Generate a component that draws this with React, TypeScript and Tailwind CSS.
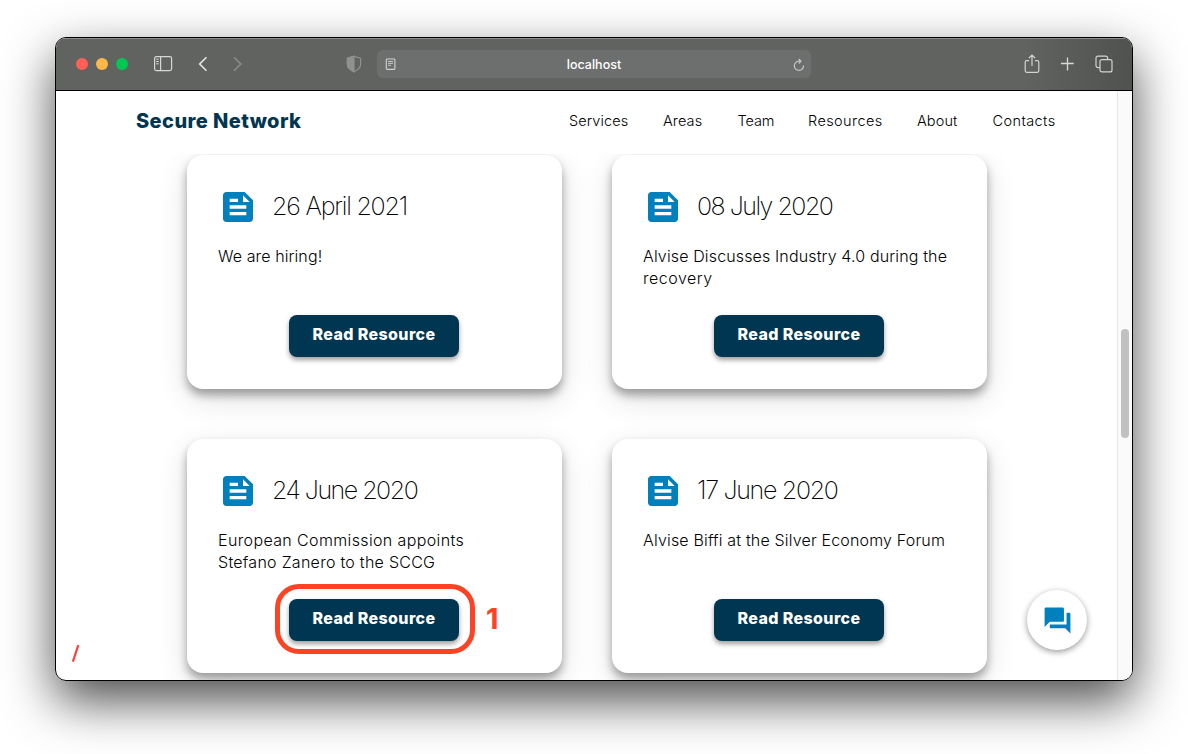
import React from "react";
import { MdFeed, MdForum } from "react-icons/md";

const NAV = [
  { label: "Services", style: "w-[94px] tracking-[0.1px]" },
  { label: "Areas", style: "w-[74.5px] tracking-[0.1px]" },
  { label: "Team", style: "w-[70.5px] tracking-[-0.1px]" },
  { label: "Resources", style: "w-[109px] tracking-[0.4px]" },
  { label: "About", style: "w-[75.5px] tracking-[0.1px]" },
  { label: "Contacts", style: "w-[66px] tracking-[0.4px]" },
];

const CARDS = [
  {
    date: "26 April 2021",
    dateStyle: "tracking-[-1.2px]",
    lines: [{ text: "We are hiring!", style: "tracking-[0.1px]" }],
    marked: false,
  },
  {
    date: "08 July 2020",
    dateStyle: "tracking-[-1.5px]",
    lines: [
      { text: "Alvise Discusses Industry 4.0 during the", style: "tracking-[0.14px]" },
      { text: "recovery", style: "tracking-[0.5px]" },
    ],
    marked: false,
  },
  {
    date: "24 June 2020",
    dateStyle: "tracking-[-1.5px]",
    lines: [
      { text: "European Commission appoints", style: "tracking-[0.37px]" },
      { text: "Stefano Zanero to the SCCG", style: "tracking-[0.27px]" },
    ],
    marked: true,
  },
  {
    date: "17 June 2020",
    dateStyle: "tracking-[-1.3px]",
    lines: [{ text: "Alvise Biffi at the Silver Economy Forum", style: "tracking-[0.17px]" }],
    marked: false,
  },
];

type CardData = (typeof CARDS)[number];

function TitleBar() {
  return (
    <div className="flex h-[53px] shrink-0 items-center border-b border-black bg-linear-to-r from-[#616361] from-90% to-[#50524f] shadow-[inset_0_1px_0_#8b8d8b]">
      <div className="ml-5 flex gap-2">
        <span className="size-3 rounded-full bg-[#ff5f57]" />
        <span className="size-3 rounded-full bg-[#ffb849]" />
        <span className="size-3 rounded-full bg-[#00c853]" />
      </div>
      <svg className="ml-[25px]" width="20" height="16" viewBox="0 0 20 16" fill="none" stroke="#d6d7d6" strokeWidth="1.2">
        <rect x="1.6" y="0.6" width="17" height="14" rx="1.8" />
        <path d="M7.6 .6v14" />
        <path d="M3.2 3.200h2.600M3.200 5.500h2.600M3.200 7.800h2.600" strokeWidth="1" />
      </svg>
      <svg className="ml-[24px]" width="12" height="16" viewBox="0 0 12 16" fill="none" stroke="#e6e6e6" strokeWidth="1.6">
        <path d="M9.5 1.3 2.7 8l6.8 6.7" />
      </svg>
      <svg className="ml-[23px]" width="12" height="16" viewBox="0 0 12 16" fill="none" stroke="#8b8d8b" strokeWidth="1.6">
        <path d="M2 1.3 8.8 8 2 14.7" />
      </svg>
      <svg className="ml-[102px]" width="16" height="18" viewBox="0 0 16 18" fill="none" stroke="#8f918f" strokeWidth="1.2">
        <path d="M8 1.2 14.6 3.3v6.2c0 3.2-3 5.6-6.6 7.3C4.4 15.1 1.4 12.7 1.4 9.5V3.3z" />
        <path d="M8 1.2v15.6C4.4 15.1 1.4 12.7 1.4 9.5V3.3z" fill="#8f918f" />
      </svg>
      <div className="ml-[15px] flex h-7 w-[434px] items-center rounded-md bg-[#6d6f6e] pl-[8px] pr-[6px]">
        <svg width="12" height="14" viewBox="0 0 12 14" fill="none" stroke="#cfd0cf" strokeWidth="1.1">
          <rect x="1.3" y="2" width="8.6" height="10.400" rx=".8" />
          <path d="M3 4.500h5M3 6.400h5M3 8.300h3" strokeWidth=".9" />
        </svg>
        <span className="grow pr-[2px] pt-[2px] text-center text-[12.5px] font-medium tracking-[0.02px] text-white">localhost</span>
        <svg className="mt-px" width="12" height="14" viewBox="0 0 12 14" fill="none" stroke="#c4c5c4" strokeWidth="1.2">
          <path d="M10.5 7.5a4.6 4.6 0 1 1-4.6-4.3h1.800M5.700 1l2.300 2.200-2.300 2.300" />
        </svg>
      </div>
      <svg className="-mt-px ml-[213px]" width="16" height="20" viewBox="0 0 16 20" fill="none" stroke="#d2d3d2" strokeWidth="1.2">
        <path d="M5 6.7H2.700a1.500 1.500 0 0 0-1.500 1.500v8.600a1.500 1.500 0 0 0 1.500 1.500h10.600a1.500 1.500 0 0 0 1.500-1.500V8.200a1.500 1.500 0 0 0-1.500-1.500H11M8 12V1.200M4.800 4.200 8 1l3.200 3.200" />
      </svg>
      <svg className="-mt-px ml-[20px]" width="14" height="14" viewBox="0 0 14 14" fill="none" stroke="#d8d9d8" strokeWidth="1.3">
        <path d="M7.500 .6v12.800M.9 6.500h12.800" />
      </svg>
      <svg className="-mt-px ml-[21px]" width="18" height="18" viewBox="0 0 18 18" fill="none" stroke="#d2d3d2" strokeWidth="1.2">
        <rect x="5" y="4.600" width="12" height="12.300" rx="2" />
        <path d="M5 12.600H3a2 2 0 0 1-2-2V3.100a2 2 0 0 1 2-2h7.600a2 2 0 0 1 2 2v1.500" />
      </svg>
    </div>
  );
}

function Card({ date, dateStyle, lines, marked }: CardData) {
  return (
    <article className="flex h-[234px] flex-col rounded-[16px] bg-white px-[31px] py-8 shadow-[0_6px_10px_rgba(0,0,0,0.34),0_10px_32px_rgba(0,0,0,0.12)]">
      <div className="flex h-10 items-center">
        <MdFeed size={40} color="#0080bd" />
        <h2 className={`ml-[14px] whitespace-nowrap pb-0.5 text-[25px] font-extralight leading-9 ${dateStyle}`}>{date}</h2>
      </div>
      <div className="mt-[18px] h-11 whitespace-nowrap text-[16px] font-light leading-[22px]">
        {lines.map((line) => (
          <p key={line.text} className={line.style}>{line.text}</p>
        ))}
      </div>
      <div className="relative ml-[71px] mt-[26px] flex h-[42px] w-[170px]">
        <button className="h-[42px] w-full whitespace-nowrap rounded-lg bg-[#003652] pb-[4px] text-[16px] font-extrabold tracking-[0.38px] text-white shadow-[0_3px_5px_rgba(0,0,0,0.38)]">
          Read Resource
        </button>
        {marked && (
          <>
            <span className="absolute -left-[14px] -top-[15px] h-[70px] w-[200px] rounded-[24px] border-[5px] border-[#ff4124]" />
            <span className="absolute left-[197px] top-[1px] text-[29px] font-bold leading-[38px] text-[#ff4124]">1</span>
          </>
        )}
      </div>
    </article>
  );
}

export default function App() {
  return (
    <div className="h-[754px] w-[1188px] overflow-hidden bg-white pl-[55px] pt-[37px] font-['Inter',sans-serif] text-black">
      <div className="h-[644px] w-[1078px] rounded-[11px] shadow-[0_20px_50px_rgba(0,0,0,0.7)]">
        <div className="relative flex h-full flex-col overflow-hidden rounded-[11px] border border-black bg-white">
          <TitleBar />
          <div className="flex min-h-0 grow">
            <div className="flex w-[1061px] flex-col overflow-hidden">
              <header className="z-10 flex h-[63px] shrink-0 items-center bg-white pb-[3px] pl-[80px]">
                <div className="w-[433px] whitespace-nowrap text-[20px] font-extrabold tracking-[0.42px] text-[#003652]">Secure Network</div>
                <nav className="flex text-[14.5px] font-light">
                  {NAV.map((item) => (
                    <a key={item.label} className={item.style}>{item.label}</a>
                  ))}
                </nav>
              </header>
              <main className="grid grid-cols-[375px_375px] gap-[50px] pl-[131px] pt-px">
                {CARDS.map((card) => (
                  <Card key={card.date} {...card} />
                ))}
              </main>
            </div>
            <div className="flex w-[15px] flex-col border-l border-[#e8e8e8] bg-[#fafafa] pl-[3px] pt-[238px]">
              <div className="h-[109px] w-2 rounded-full bg-[#c1c1c1]" />
            </div>
          </div>
          <div className="absolute bottom-[30px] right-[45px] flex size-[60px] items-center justify-center rounded-full bg-white shadow-[0_2px_6px_rgba(0,0,0,0.4)]">
            <MdForum size={31} color="#0080bd" />
          </div>
          <svg className="absolute bottom-[16px] left-[14px]" width="12" height="20" viewBox="0 0 12 20">
            <path d="M8.3 1.2 2.9 17.7" stroke="#ff4040" strokeWidth="2.2" />
          </svg>
        </div>
      </div>
    </div>
  );
}
